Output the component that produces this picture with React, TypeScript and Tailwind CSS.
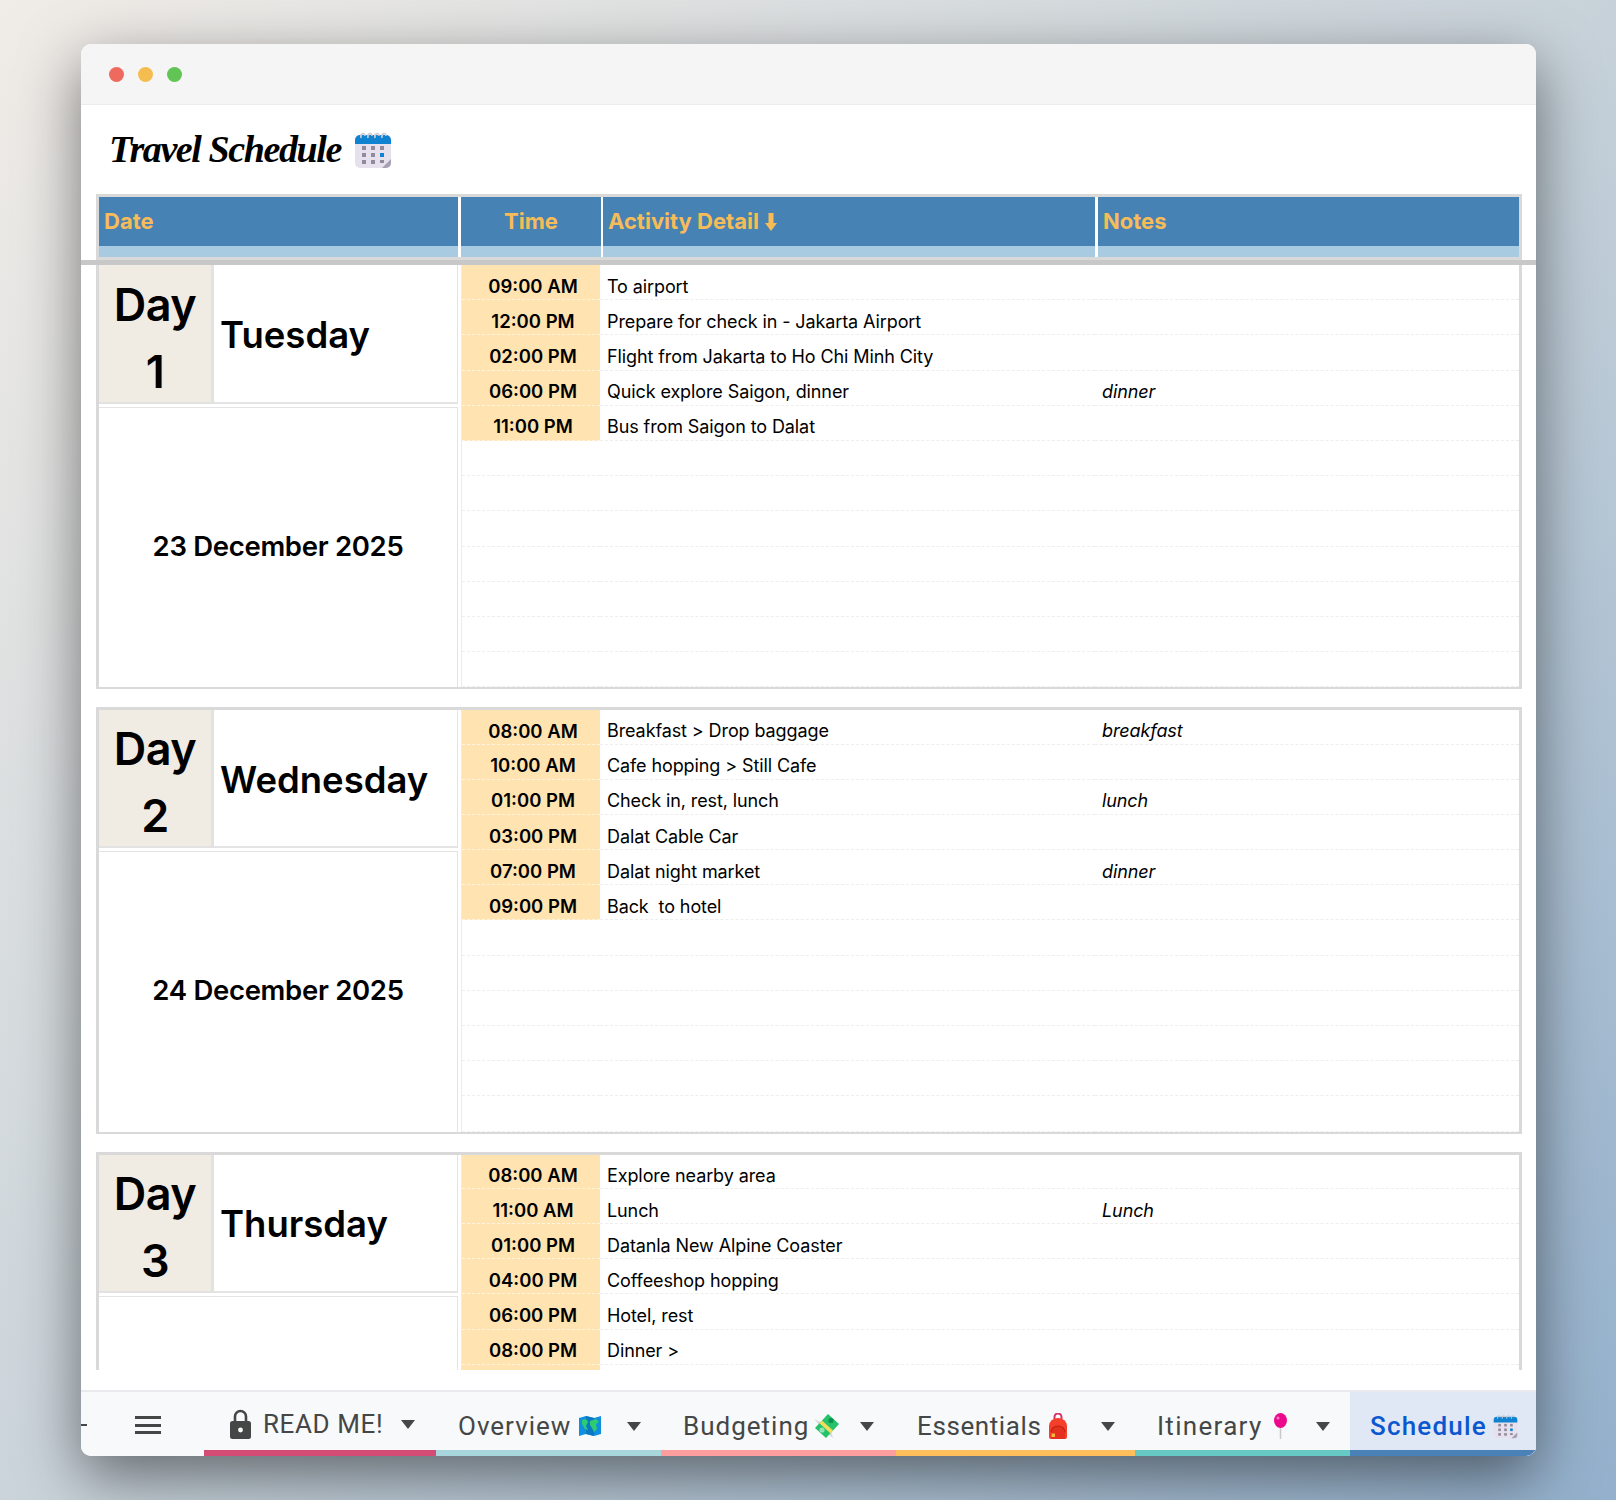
interface Row {
  time: string;
  activity?: string;
  note?: string;
}

interface Day {
  day: string;
  weekday: string;
  date: string;
  rows: Row[];
}

const days: Day[] = [
  {
    day: '1',
    weekday: 'Tuesday',
    date: '23 December 2025',
    rows: [
      { time: '09:00 AM', activity: 'To airport' },
      { time: '12:00 PM', activity: 'Prepare for check in - Jakarta Airport' },
      { time: '02:00 PM', activity: 'Flight from Jakarta to Ho Chi Minh City' },
      { time: '06:00 PM', activity: 'Quick explore Saigon, dinner', note: 'dinner' },
      { time: '11:00 PM', activity: 'Bus from Saigon to Dalat' },
    ],
  },
  {
    day: '2',
    weekday: 'Wednesday',
    date: '24 December 2025',
    rows: [
      { time: '08:00 AM', activity: 'Breakfast > Drop baggage', note: 'breakfast' },
      { time: '10:00 AM', activity: 'Cafe hopping > Still Cafe' },
      { time: '01:00 PM', activity: 'Check in, rest, lunch', note: 'lunch' },
      { time: '03:00 PM', activity: 'Dalat Cable Car' },
      { time: '07:00 PM', activity: 'Dalat night market', note: 'dinner' },
      { time: '09:00 PM', activity: 'Back  to hotel' },
    ],
  },
  {
    day: '3',
    weekday: 'Thursday',
    // date cell is scrolled out of view here
    date: '',
    rows: [
      { time: '08:00 AM', activity: 'Explore nearby area' },
      { time: '11:00 AM', activity: 'Lunch', note: 'Lunch' },
      { time: '01:00 PM', activity: 'Datanla New Alpine Coaster' },
      { time: '04:00 PM', activity: 'Coffeeshop hopping' },
      { time: '06:00 PM', activity: 'Hotel, rest' },
      { time: '08:00 PM', activity: 'Dinner >' },
      { time: ' ' },
    ],
  },
];

function CalendarIcon({ className }: { className?: string }) {
  return (
    <svg viewBox="0 0 38 38" className={className}>
      <rect x="1" y="4" width="36" height="33" rx="5" fill="#e6e1ec" />
      <path d="M1 13V9a5 5 0 0 1 5-5h26a5 5 0 0 1 5 5v4z" fill="#0f83d1" />
      <path d="M37 28v4a5 5 0 0 1-5 5h-4z" fill="#a79fb3" />
      <g fill="none" stroke="#cfcbd6" strokeWidth="1.6">
        <path d="M7 7c-1-5 4-6 4-2M14 7c-1-5 4-6 4-2M21 7c-1-5 4-6 4-2M28 7c-1-5 4-6 4-2" />
      </g>
      <g fill="#8f8a9c">
        <rect x="8" y="15" width="4" height="4" />
        <rect x="17" y="15" width="4" height="4" />
        <rect x="26" y="15" width="4" height="4" />
        <rect x="8" y="22" width="4" height="4" />
        <rect x="17" y="22" width="4" height="4" />
        <rect x="8" y="29" width="4" height="4" />
        <rect x="17" y="29" width="4" height="4" />
        <rect x="26" y="29" width="4" height="3" />
      </g>
      <rect x="26" y="22" width="4" height="4" fill="#0f83d1" />
    </svg>
  );
}

function LockIcon() {
  return (
    <svg viewBox="0 0 21 30" className="h-[30px] w-[21px] shrink-0">
      <path d="M5 13V7.5a5.5 5.5 0 0 1 11 0V13" fill="none" stroke="#444746" strokeWidth="2.6" />
      <rect x="0" y="12" width="21" height="18" rx="2.5" fill="#444746" />
      <circle cx="10.5" cy="21" r="2.4" fill="#f8f9fa" />
    </svg>
  );
}

function MapIcon() {
  return (
    <svg viewBox="0 0 22 20" className="ml-2 h-[20px] w-[22px]">
      <path d="M0 2l7-2 8 2 7-2v18l-7 2-8-2-7 2z" fill="#0f8fe0" />
      <path d="M7 0l8 2v18l-8-2z" fill="#0b78c4" />
      <path d="M3 4l4-1 2 3-2 4 2 4-3-1-3-5zM11 5l6-2 3 3-3 2 1 5-3 3-2-4-2-3z" fill="#2ecb71" />
    </svg>
  );
}

function MoneyIcon() {
  return (
    <svg viewBox="0 0 27 27" className="ml-1 h-[27px] w-[27px]">
      <path d="M1 6l12 14 7 5-3-12z" fill="#dcdcdc" />
      <path d="M15 1l11 10-13 14L2 15z" fill="#26c26b" />
      <path d="M9 7.5l11 10-2.6 2.8-11-10z" fill="#f3dd5f" />
      <circle cx="18" cy="7.5" r="2.6" fill="#0d8f50" />
      <circle cx="9" cy="17" r="2.6" fill="#8fe6b4" />
    </svg>
  );
}

function BagIcon() {
  return (
    <svg viewBox="0 0 20 26" className="ml-[7px] h-[26px] w-[20px]">
      <path d="M6.5 6V4a3.5 3.5 0 0 1 7 0v2" fill="none" stroke="#d6336c" strokeWidth="2" />
      <path d="M1 13a9 8 0 0 1 18 0v11a2 2 0 0 1-2 2H3a2 2 0 0 1-2-2z" fill="#f4402a" />
      <path d="M3 26v-7a7 6 0 0 1 14 0v7" fill="#e3301f" />
      <path d="M3 19a7 6 0 0 1 14 0" fill="none" stroke="#c22114" strokeWidth="1.2" />
      <rect x="3.5" y="20.5" width="3.5" height="3.5" fill="#f6b73c" />
    </svg>
  );
}

function PinIcon() {
  return (
    <svg viewBox="0 0 15 26" className="ml-[10px] h-[26px] w-[15px]">
      <path d="M7.5 14v12" stroke="#c9c9c9" strokeWidth="1.5" />
      <ellipse cx="7.5" cy="7.5" rx="6.5" ry="7.5" fill="#ec0a8c" />
      <circle cx="5" cy="5" r="1.5" fill="#f97cc2" />
    </svg>
  );
}

function Caret({ className }: { className: string }) {
  return (
    <svg viewBox="0 0 14 9" className={`h-[9px] w-[14px] shrink-0 ${className}`}>
      <path d="M0 0h14L7 9z" fill="#444746" />
    </svg>
  );
}

function DayBlock({ data, first }: { data: Day; first: boolean }) {
  const filled: Row[] = [...data.rows];
  while (filled.length < 12) filled.push({ time: '' });

  return (
    <div className={`flex border-x-[3px] border-b-2 border-[#d9d9d9] ${first ? '' : 'mt-[18px] border-t-[3px]'}`}>
      <div className="flex w-[362px] shrink-0 flex-col">
        <div className={`flex ${first ? 'h-[139px]' : 'h-[138px]'}`}>
          <div className="flex w-[115px] shrink-0 flex-col items-center justify-center border-r-[3px] border-b-2 border-[#e2e2e2] bg-[#f0ebe3] pt-[8px] text-[45px] leading-[67px] font-semibold tracking-[-0.5px] text-black">
            <span>Day</span>
            <span>{data.day}</span>
          </div>
          <div className="flex w-[244px] items-center border-r border-b-2 border-[#e4e4e4] pt-[4px] pl-[6px] text-[36.5px] font-semibold text-black">
            {data.weekday}
          </div>
        </div>
        <div className="mt-[3px] mr-[3px] flex flex-1 items-center justify-center border-t border-r border-[#e4e4e4] pb-[2px] text-[27.5px] font-semibold tracking-[-0.3px] text-black">
          {data.date}
        </div>
      </div>
      <div className="flex-1 border-l border-[#ececec]">
        {filled.map((row, i) => (
          <div key={i} className={`flex ${i === 0 && !first ? 'h-[34.3px]' : 'h-[35.2px]'}`}>
            <div
              className={`flex w-[138px] shrink-0 items-center justify-center border-b border-dashed pt-[9px] pl-[4px] text-[18.5px] font-semibold text-black ${
                row.time ? 'border-[#fff4e0] bg-[#ffe3b0]' : 'border-[#eeeeee]'
              }`}
            >
              {row.time}
            </div>
            <div className="flex w-[495px] shrink-0 items-center border-b border-dashed border-[#eeeeee] pt-[8px] pl-[7px] text-[18px] tracking-[-0.1px] whitespace-pre text-black">
              {row.activity}
            </div>
            <div className="flex flex-1 items-center border-b border-dashed border-[#eeeeee] pt-[8px] pl-[7px] text-[18px] tracking-[-0.1px] text-black italic">
              {row.note}
            </div>
          </div>
        ))}
      </div>
    </div>
  );
}

export default function App() {
  return (
    <div className="h-[1500px] overflow-hidden bg-[linear-gradient(135deg,#f0ece7_0%,#c9d3da_50%,#93b0cc_100%)] pt-[44px] pl-[81px] [font-family:Inter,sans-serif]">
      <div className="flex h-[1412px] w-[1455px] flex-col overflow-hidden rounded-[10px] bg-white shadow-[0_20px_60px_rgba(0,0,0,0.5)]">
        {/* Window bar */}
        <div className="flex h-[61px] shrink-0 items-center gap-[14px] border-b border-[#ececec] bg-[#f5f5f5] pl-[28px]">
          <span className="h-[15px] w-[15px] rounded-full bg-[#ee6a5f]" />
          <span className="h-[15px] w-[15px] rounded-full bg-[#f5bd4f]" />
          <span className="h-[15px] w-[15px] rounded-full bg-[#61c454]" />
        </div>

        {/* Sheet title */}
        <div className="flex h-[89px] shrink-0 items-center pl-[28px]">
          <span className="text-[38px] font-bold tracking-[-1.4px] text-black italic [font-family:'Liberation_Serif',serif]">Travel Schedule</span>
          <CalendarIcon className="ml-[13px] h-[38px] w-[38px]" />
        </div>

        {/* Header */}
        <div className="ml-[15px] flex w-[1426px] shrink-0 border-x-[3px] border-t-[3px] border-b-[3px] border-[#d9d9d9] bg-white text-[22px] font-bold text-[#f7bc58]">
          <div className="w-[359px]">
            <div className="flex h-[49px] items-center bg-[#4682b4] pl-[5px]">Date</div>
            <div className="h-[11px] bg-[#a9cbe2]" />
          </div>
          <div className="ml-[3px] w-[140px]">
            <div className="flex h-[49px] items-center justify-center bg-[#4682b4]">Time</div>
            <div className="h-[11px] bg-[#a9cbe2]" />
          </div>
          <div className="ml-[2px] w-[492px]">
            <div className="flex h-[49px] items-center bg-[#4682b4] pl-[5px]">
              Activity Detail
              <svg viewBox="0 0 12 18" className="ml-[6px] h-[18px] w-[12px]">
                <path d="M3.5 0h5v10h3.5l-6 8-6-8h3.5z" fill="#f7bc58" />
              </svg>
            </div>
            <div className="h-[11px] bg-[#a9cbe2]" />
          </div>
          <div className="ml-[3px] flex-1">
            <div className="flex h-[49px] items-center bg-[#4682b4] pl-[5px]">Notes</div>
            <div className="h-[11px] bg-[#a9cbe2]" />
          </div>
        </div>
        <div className="h-[5px] shrink-0 bg-[#c8c8c8]" />

        {/* Sheet body */}
        <div className="ml-[15px] h-[1105px] w-[1426px] shrink-0 overflow-hidden">
          {days.map((d, i) => (
            <DayBlock key={d.day} data={d} first={i === 0} />
          ))}
        </div>

        {/* Sheet tabs */}
        <div className="mt-auto flex h-[66px] shrink-0 border-t-2 border-[#e8eaed] bg-[#f8f9fa] text-[26px] leading-[32px] tracking-[1px] whitespace-nowrap text-[#444746] [font-family:Roboto,sans-serif]">
          <div className="flex w-[123px] shrink-0 items-center pt-[2px]">
            <span className="h-[2px] w-[6px] bg-[#444746]" />
            <div className="ml-[48px] flex w-[26px] flex-col gap-[4.5px]">
              <span className="h-[3px] bg-[#444746]" />
              <span className="h-[3px] bg-[#444746]" />
              <span className="h-[3px] bg-[#444746]" />
            </div>
          </div>
          <div className="flex w-[232px] shrink-0 items-center border-b-[6px] border-[#d24c75] pt-[6px] pl-[26px]">
            <LockIcon />
            <span className="ml-[12px] tracking-[0.6px]">READ ME!</span>
            <Caret className="ml-[18px]" />
          </div>
          <div className="flex w-[225px] shrink-0 items-center border-b-[6px] border-[#a8d6dd] pt-[10px] pl-[22px]">
            <span>Overview</span>
            <MapIcon />
            <Caret className="ml-[26px]" />
          </div>
          <div className="flex w-[235px] shrink-0 items-center border-b-[6px] border-[#ff9e9e] pt-[10px] pl-[22px]">
            <span>Budgeting</span>
            <MoneyIcon />
            <Caret className="ml-[20px]" />
          </div>
          <div className="flex w-[239px] shrink-0 items-center border-b-[6px] border-[#ffbf5c] pt-[10px] pl-[21px]">
            <span className="tracking-[0.6px]">Essentials</span>
            <BagIcon />
            <Caret className="ml-[33px]" />
          </div>
          <div className="flex w-[215px] shrink-0 items-center border-b-[6px] border-[#66c9c4] pt-[10px] pl-[22px]">
            <span className="tracking-[1.3px]">Itinerary</span>
            <PinIcon />
            <Caret className="ml-[28px]" />
          </div>
          <div className="flex flex-1 items-center border-b-[6px] border-[#4a82b8] bg-[#e1e8f5] pt-[10px] pl-[20px] font-medium tracking-[1.2px] text-[#0b57d0]">
            <span>Schedule</span>
            <CalendarIcon className="ml-[6px] h-[25px] w-[25px]" />
          </div>
        </div>
      </div>
    </div>
  );
}
